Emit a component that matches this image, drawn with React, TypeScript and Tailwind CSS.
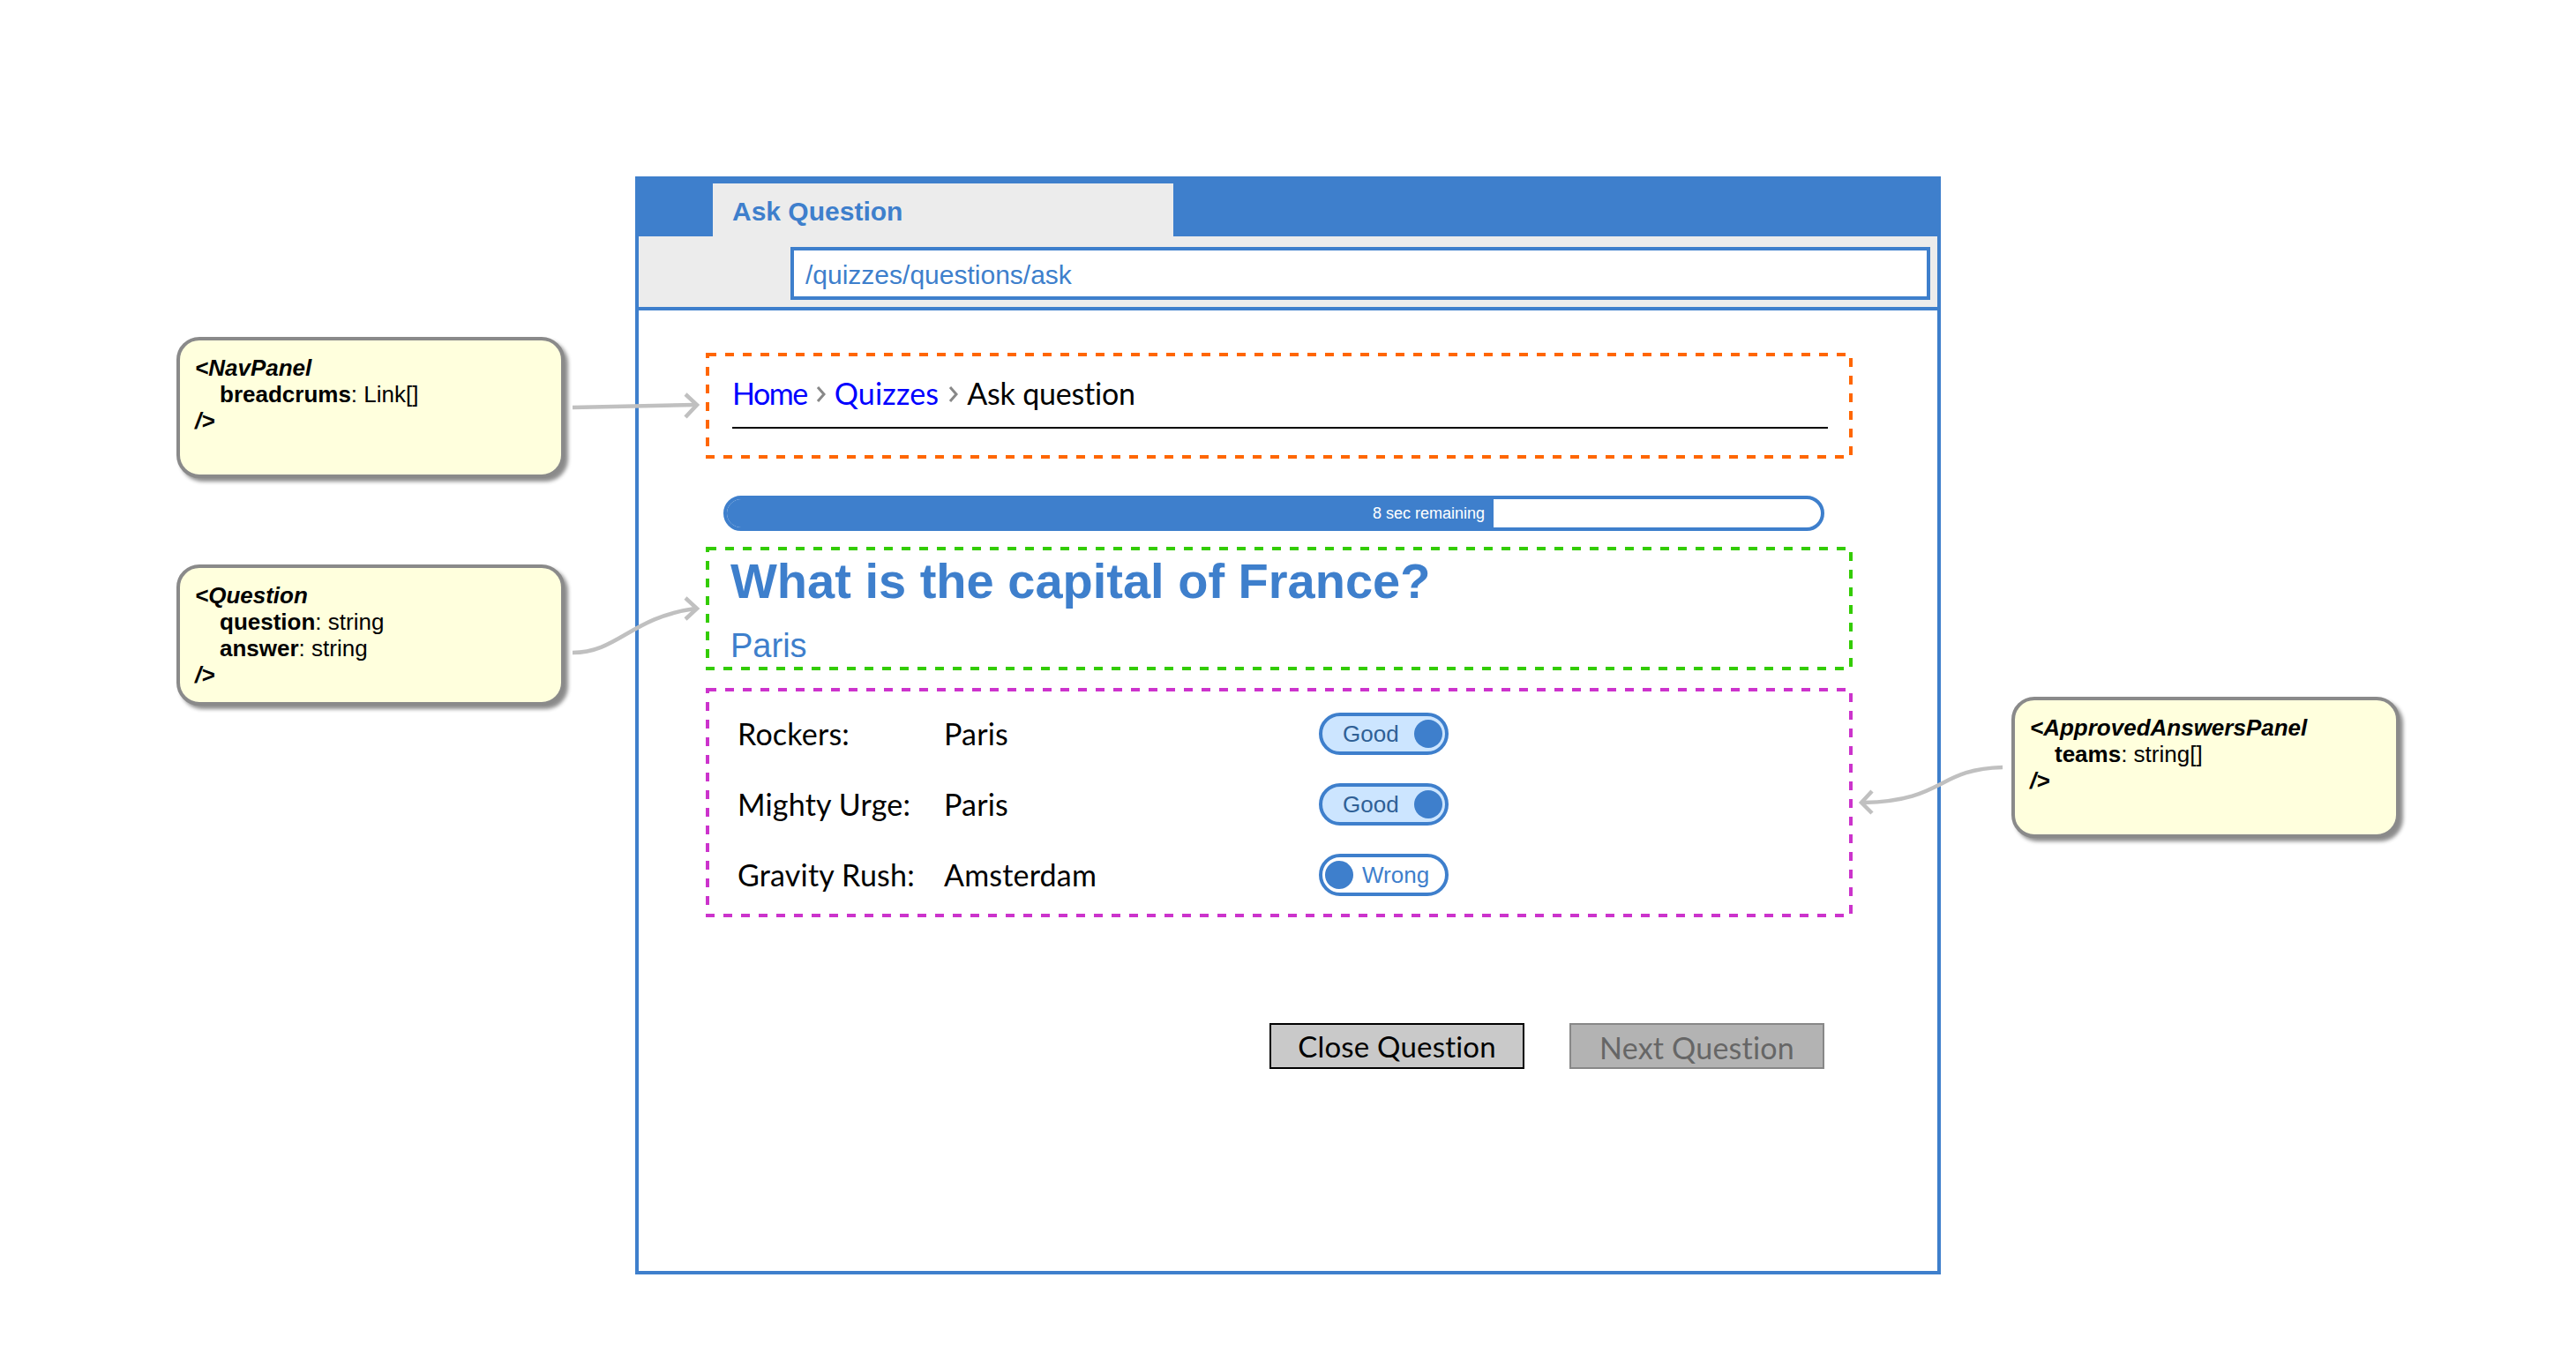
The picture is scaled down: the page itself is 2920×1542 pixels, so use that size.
import React from "react";

const sans = "font-['Liberation_Sans',Arial,sans-serif]";
const comic = "font-['Lato',sans-serif]";

function DashedBox({ w, h, color, className, children }: { w: number; h: number; color: string; className?: string; children?: React.ReactNode }) {
  return (
    <div className={`relative ${className ?? ""}`}>
      <svg className="absolute left-0 top-0" width={w} height={h} fill="none">
        <rect x="2" y="2" width={w - 4} height={h - 4} stroke={color} strokeWidth="4" strokeDasharray="10 10" />
      </svg>
      {children}
    </div>
  );
}

function Chevron({ className }: { className: string }) {
  return (
    <svg className={`mt-[4px] ${className}`} width="11" height="18" viewBox="0 0 11 18" fill="none" stroke="#888888" strokeWidth="3">
      <path d="M2 1 L9 9 L2 17" />
    </svg>
  );
}

function Toggle({ on, label }: { on: boolean; label: string }) {
  return on ? (
    <div className="flex h-12 w-[147px] items-center justify-between rounded-3xl border-4 border-[#3e7fcc] bg-[#cce5ff] pl-[23px] pr-[3px]">
      <span className="pt-[1px] text-[26px] text-[#2f6096]">{label}</span>
      <span className="h-8 w-8 rounded-full bg-[#3e7fcc]" />
    </div>
  ) : (
    <div className="flex h-12 w-[147px] items-center rounded-3xl border-4 border-[#3e7fcc] bg-white pl-[3px]">
      <span className="h-8 w-8 rounded-full bg-[#3e7fcc]" />
      <span className="ml-[10px] pt-[1px] text-[26px] text-[#3e7fcc]">{label}</span>
    </div>
  );
}

function Row({ team, city, on, label }: { team: string; city: string; on: boolean; label: string }) {
  return (
    <div className="flex h-20 items-center">
      <span className={`${comic} w-[234px] pb-[2px] text-[34px] tracking-[0.2px] text-black`}>{team}</span>
      <span className={`${comic} w-[425px] pb-[2px] text-[34px] tracking-[0.2px] text-black`}>{city}</span>
      <Toggle on={on} label={label} />
    </div>
  );
}

function Callout({ className, name, props }: { className: string; name: string; props: [string, string][] }) {
  return (
    <div className={`absolute h-40 w-[440px] rounded-[26px] border-4 border-[#8a8a8a] bg-[#ffffdd] pl-[17px] pt-[16px] text-[26px] leading-[30px] text-black shadow-[4px_4px_4px_rgba(0,0,0,0.45)] ${className}`}>
      <div className="font-bold italic">&lt;{name}</div>
      {props.map(([k, v]) => (
        <div key={k} className="pl-7">
          <span className="font-bold">{k}</span>: {v}
        </div>
      ))}
      <div className="font-bold italic">/&gt;</div>
    </div>
  );
}

export default function App() {
  return (
    <div className={`relative h-[1542px] w-[2920px] overflow-hidden bg-white pl-[720px] pt-[200px] ${sans}`}>
      <div className="h-[1245px] w-[1480px] border-4 border-[#3e7fcc] bg-white">
        <div className="flex h-16 items-end bg-[#3e7fcc] pl-[84px]">
          <div className="flex h-[60px] w-[522px] items-center bg-[#ececec] pl-[22px] pt-[2px] text-[30px] font-bold text-[#3e7fcc]">Ask Question</div>
        </div>
        <div className="h-[84px] border-b-4 border-[#3e7fcc] bg-[#ececec] pl-[172px] pr-2 pt-3">
          <div className="flex h-[60px] items-center border-4 border-[#3e7fcc] bg-white pl-[13px] pt-[2px] text-[30px] text-[#3e7fcc]">/quizzes/questions/ask</div>
        </div>
        <div className="pl-[76px] pt-12">
          <DashedBox w={1300} h={120} color="#ff6600" className="h-[120px] w-[1300px] px-[30px] pt-[26px]">
            <div className={`${comic} flex h-[60px] w-[1242px] items-center border-b-2 border-black pb-5 text-[34px]`}>
              <span className="tracking-[-1.5px] text-[#0000ff]">Home</span>
              <Chevron className="mx-[10px]" />
              <span className="tracking-[0.2px] text-[#0000ff]">Quizzes</span>
              <Chevron className="ml-[11px] mr-[10px]" />
              <span className="tracking-[-0.2px] text-black">Ask question</span>
            </div>
          </DashedBox>
          <div className="ml-5 mt-[42px] flex h-10 w-[1248px] overflow-hidden rounded-[20px] border-4 border-[#3e7fcc] bg-white">
            <div className="flex h-full w-[869px] items-center justify-end bg-[#3e7fcc] pr-[10px] text-[18px] text-white">8 sec remaining</div>
          </div>
          <DashedBox w={1300} h={140} color="#33cc00" className="mt-[18px] h-[140px] w-[1300px] pl-[28px]">
            <h1 className="pt-[3px] text-[56px] font-bold leading-[72px] text-[#3e7fcc]">What is the capital of France?</h1>
            <div className="mt-[15px] text-[38px] leading-[44px] text-[#3e7fcc]">Paris</div>
          </DashedBox>
          <DashedBox w={1300} h={260} color="#cc33cc" className="mt-5 h-[260px] w-[1300px] pl-[36px] pt-3">
            <Row team="Rockers:" city="Paris" on label="Good" />
            <Row team="Mighty Urge:" city="Paris" on label="Good" />
            <Row team="Gravity Rush:" city="Amsterdam" on={false} label="Wrong" />
          </DashedBox>
          <div className={`${comic} ml-[639px] mt-[120px] flex gap-[51px] tracking-[0.2px]`}>
            <div className="flex h-[52px] w-[289px] items-center justify-center border-2 border-black bg-[#c9c9c9] pt-[2px] text-[33px] text-black">Close Question</div>
            <div className="flex h-[52px] w-[289px] items-center justify-center border-2 border-[#888888] bg-[#b3b3b3] pt-[2px] text-[34px] text-[#666666]">Next Question</div>
          </div>
        </div>
      </div>

      <Callout className="left-[200px] top-[382px]" name="NavPanel" props={[["breadcrums", "Link[]"]]} />
      <Callout className="left-[200px] top-[640px]" name="Question" props={[["question", "string"], ["answer", "string"]]} />
      <Callout className="left-[2280px] top-[790px]" name="ApprovedAnswersPanel" props={[["teams", "string[]"]]} />

      <svg className="pointer-events-none absolute left-0 top-0" width="2920" height="1542" fill="none" stroke="#c0c0c0" strokeWidth="4.5">
        <path d="M649 462 L788 459" />
        <path d="M777 447 L790 459 L777 473" />
        <path d="M649 740 C700 740 715 700 788 690" />
        <path d="M777 678 L790 690 L777 702" />
        <path d="M2270 870 C2195 872 2205 908 2112 910" />
        <path d="M2122 897 L2110 910 L2122 922" />
      </svg>
    </div>
  );
}
